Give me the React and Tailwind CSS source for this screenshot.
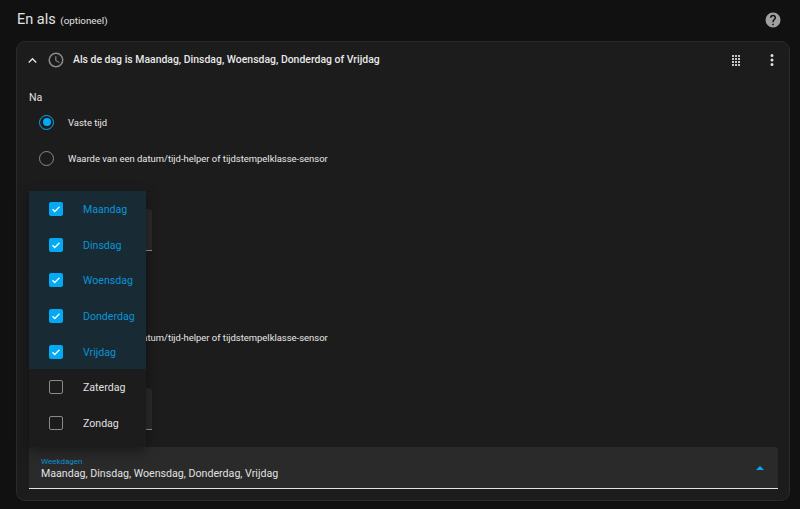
import React from 'react';

const days = [
  { name: 'Maandag', checked: true },
  { name: 'Dinsdag', checked: true },
  { name: 'Woensdag', checked: true },
  { name: 'Donderdag', checked: true },
  { name: 'Vrijdag', checked: true },
  { name: 'Zaterdag', checked: false },
  { name: 'Zondag', checked: false },
];

const Icon = ({ d, className }) => (
  <svg viewBox="0 0 24 24" className={className} fill="currentColor">
    <path d={d} />
  </svg>
);

const Radio = ({ label, checked }) => (
  <div className="flex items-center h-9 pl-[10px]">
    <div className={`w-[15px] h-[15px] rounded-full border-[1.7px] flex items-center justify-center ${checked ? 'border-[#03a9f4]' : 'border-[#8a8a8a]'}`}>
      {checked && <div className="w-[8px] h-[8px] rounded-full bg-[#03a9f4]" />}
    </div>
    <span className="ml-[14px] mt-[2px] text-[9.45px] text-[#e8e8e8]">{label}</span>
  </div>
);

const TimeGroup = ({ label }) => (
  <div>
    <div className="text-[10.6px] leading-[14px] text-[#e1e1e1]">{label}</div>
    <div className="mt-[-1px]">
      <Radio label="Vaste tijd" checked />
      <Radio label="Waarde van een datum/tijd-helper of tijdstempelklasse-sensor" />
    </div>
    <div className="mt-[33px] w-[123px] h-[42px] bg-[#2a2a2a] rounded-t-[3px] border-b border-[#8f8f8f]" />
  </div>
);

const DayOption = ({ name, checked }) => (
  <div className={`flex items-center h-[35.7px] pl-[20px] ${checked ? 'bg-[#182a33]' : ''}`}>
    {checked ? (
      <div className="w-[14px] h-[14px] rounded-[2px] bg-[#03a9f4] flex items-center justify-center">
        <svg viewBox="0 0 24 24" className="w-[12px] h-[12px]" fill="none" stroke="#fff" strokeWidth="2.6">
          <path d="M5 12.5l4.5 4.5L19 7.5" />
        </svg>
      </div>
    ) : (
      <div className="w-[14px] h-[14px] rounded-[2px] border-[1.5px] border-[#8a8a8a]" />
    )}
    <span className={`ml-[20px] mt-[2px] text-[10.6px] ${checked ? 'text-[#0a95d6]' : 'text-[#e1e1e1]'}`}>{name}</span>
  </div>
);

const dotRows = [0, 1, 2, 3];
const dotCols = [0, 1, 2];

export default function App() {
  return (
    <div className="relative w-[800px] h-[509px] overflow-hidden bg-[#111111] px-4 font-['Roboto',sans-serif]">
      <div className="flex items-center justify-between h-[41px] pb-[2px]">
        <div className="text-[#e1e1e1] text-[14.5px] pl-[1px]">
          En als <span className="ml-[1px] text-[9.8px]">(optioneel)</span>
        </div>
        <Icon
          className="w-[18px] h-[18px] text-[#a0a0a0] mr-[2.5px]"
          d="M15.07,11.25L14.17,12.17C13.45,12.89 13,13.5 13,15H11V14.5C11,13.39 11.45,12.39 12.17,11.67L13.41,10.41C13.78,10.05 14,9.55 14,9C14,7.89 13.1,7 12,7A2,2 0 0,0 10,9H8A4,4 0 0,1 12,5A4,4 0 0,1 16,9C16,9.88 15.64,10.67 15.07,11.25M13,19H11V17H13M12,2A10,10 0 0,0 2,12A10,10 0 0,0 12,22A10,10 0 0,0 22,12C22,6.47 17.5,2 12,2Z"
        />
      </div>

      <div className="w-[774px] h-[460px] bg-[#1c1c1c] border border-[#2a2a2a] rounded-[9px]">
        <div className="flex items-center h-[36px] pl-[6.5px] pr-[8px]">
          <Icon
            className="w-[17px] h-[17px] text-[#e1e1e1]"
            d="M7.41,15.41L12,10.83L16.59,15.41L18,14L12,8L6,14L7.41,15.41Z"
          />
          <Icon
            className="w-[18px] h-[18px] text-[#8a8a8a] ml-[6.5px]"
            d="M12,20A8,8 0 0,0 20,12A8,8 0 0,0 12,4A8,8 0 0,0 4,12A8,8 0 0,0 12,20M12,2A10,10 0 0,1 22,12A10,10 0 0,1 12,22C6.47,22 2,17.5 2,12A10,10 0 0,1 12,2M12.5,7V12.25L17,14.92L16.25,16.15L11,13V7H12.5Z"
          />
          <div className="ml-[8px] text-[10.45px] font-medium text-[#e8e8e8]">
            Als de dag is Maandag, Dinsdag, Woensdag, Donderdag of Vrijdag
          </div>
          <div className="ml-auto flex items-center">
            <svg viewBox="0 0 8 11" className="w-[8px] h-[11px] mr-[23px] text-[#c8c8c8]" fill="currentColor">
              {dotRows.map(r =>
                dotCols.map(c => <rect key={`${r}-${c}`} x={c * 3} y={r * 3} width="2" height="2" />)
              )}
            </svg>
            <Icon
              className="w-[18px] h-[18px] text-[#e1e1e1]"
              d="M12,16A2,2 0 0,1 14,18A2,2 0 0,1 12,20A2,2 0 0,1 10,18A2,2 0 0,1 12,16M12,10A2,2 0 0,1 14,12A2,2 0 0,1 12,14A2,2 0 0,1 10,12A2,2 0 0,1 12,10M12,4A2,2 0 0,1 14,6A2,2 0 0,1 12,8A2,2 0 0,1 10,6A2,2 0 0,1 12,4Z"
            />
          </div>
        </div>

        <div className="px-3 pt-[13px]">
          <TimeGroup label="Na" />
          <div className="mt-[19px]">
            <TimeGroup label="Voor" />
          </div>
          <div className="flex items-center justify-between mt-[17px] h-[42px] w-[749px] bg-[#2a2a2a] rounded-t-[3px] border-b border-[#e1e1e1] pl-3 pr-[14px]">
            <div className="pt-[3px]">
              <div className="text-[8px] leading-[10px] text-[#0a95d6]">Weekdagen</div>
              <div className="mt-[-1px] text-[10.65px] leading-[16px] text-[#e1e1e1]">Maandag, Dinsdag, Woensdag, Donderdag, Vrijdag</div>
            </div>
            <div className="w-0 h-0 border-x-[4px] border-x-transparent border-b-[4px] border-b-[#03a9f4]" />
          </div>
        </div>
      </div>

      <div className="absolute left-[29px] top-[191px] w-[117px] h-[256px] bg-[#1c1c1c] shadow-[0_4px_12px_rgba(0,0,0,0.4)]">
        {days.map(d => (
          <DayOption key={d.name} name={d.name} checked={d.checked} />
        ))}
      </div>
    </div>
  );
}
